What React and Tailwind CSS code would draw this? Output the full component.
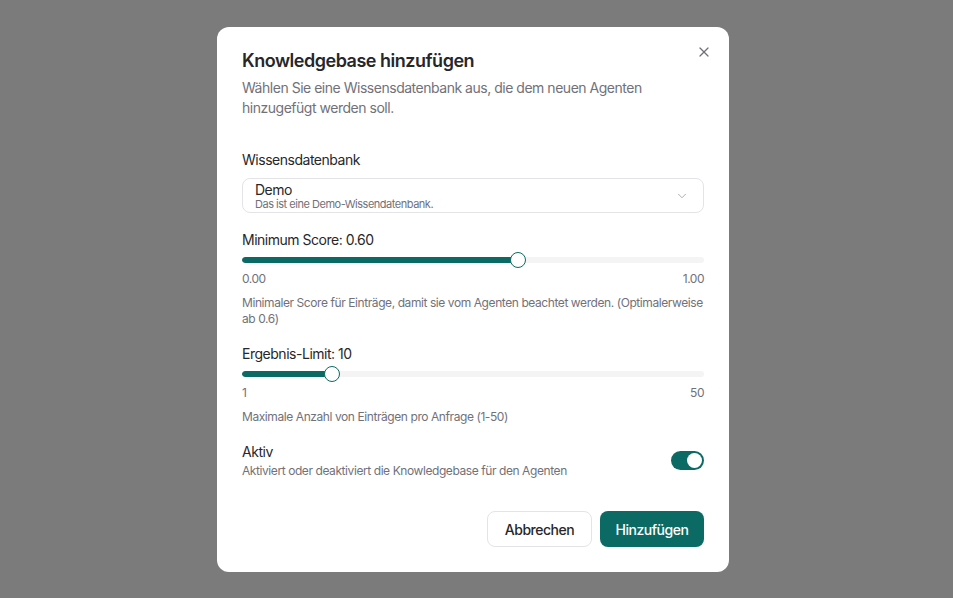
import { useState } from "react";
import * as Slider from "@radix-ui/react-slider";
import { X, ChevronDown } from "lucide-react";

function RangeField({ label, value, min, max, step, onChange, minLabel, maxLabel, hint }) {
    return (
        <div className="flex flex-col">
            <p className="text-[14px] text-[#27272a] leading-5">{label}</p>
            <Slider.Root
                className="relative flex items-center w-full h-4 mt-[2px] select-none touch-none"
                value={[value]}
                min={min}
                max={max}
                step={step}
                onValueChange={(v) => onChange(v[0])}
            >
                <Slider.Track className="relative h-[6px] grow rounded-full bg-[#f4f4f5] overflow-hidden">
                    <Slider.Range className="absolute h-full bg-[#0b6a64] rounded-full" />
                </Slider.Track>
                <Slider.Thumb className="block w-4 h-4 rounded-full bg-white border-[1.5px] border-[#0b6a64] outline-none" />
            </Slider.Root>
            <div className="flex justify-between mt-[3px] text-[12px] text-[#71717a] leading-4">
                <span>{minLabel}</span>
                <span>{maxLabel}</span>
            </div>
            <p className="mt-[8px] text-[12px] text-[#71717a] leading-4 tracking-[-0.035em]">{hint}</p>
        </div>
    );
}

export default function App() {
    const [score, setScore] = useState(0.6);
    const [limit, setLimit] = useState(10);
    const [aktiv, setAktiv] = useState(true);

    return (
        <div
            className="w-[953px] h-[598px] bg-[#7b7b7b] flex justify-start pl-[217px] pt-[27px]"
            style={{ fontFamily: "Inter, 'Noto Sans', sans-serif" }}
        >
            <div className="relative w-[512px] h-[545px] bg-white rounded-[12px] px-[25px] pt-[22px] pb-[25px] flex flex-col tracking-[-0.03em]">
                <button className="absolute right-[17px] top-[17px] text-[#71717a]">
                    <X size={16} strokeWidth={1.8} />
                </button>
                <h2 className="text-[18px] font-semibold text-[#27272a] leading-6">Knowledgebase hinzufügen</h2>
                <p className="mt-[5px] text-[14px] text-[#71717a] leading-5 pr-8">
                    Wählen Sie eine Wissensdatenbank aus, die dem neuen Agenten hinzugefügt werden soll.
                </p>

                <div className="mt-[32px] flex flex-col">
                    <p className="text-[14px] text-[#27272a] leading-5">Wissensdatenbank</p>
                    <button className="mt-2 h-[35px] w-full border border-[#e4e4e7] rounded-lg pl-[12px] pr-[14px] flex items-center justify-between text-left">
                        <div className="flex flex-col">
                            <span className="text-[14px] text-[#27272a] leading-[17px]">Demo</span>
                            <span className="text-[11px] text-[#71717a] leading-[13px]">Das ist eine Demo-Wissendatenbank.</span>
                        </div>
                        <ChevronDown size={14} className="text-[#a1a1aa]" strokeWidth={1.5} />
                    </button>
                </div>

                <div className="mt-[17px]">
                    <RangeField
                        label={`Minimum Score: ${score.toFixed(2)}`}
                        value={score}
                        min={0}
                        max={1}
                        step={0.01}
                        onChange={setScore}
                        minLabel="0.00"
                        maxLabel="1.00"
                        hint="Minimaler Score für Einträge, damit sie vom Agenten beachtet werden. (Optimalerweise ab 0.6)"
                    />
                </div>

                <div className="mt-[17px]">
                    <RangeField
                        label={`Ergebnis-Limit: ${limit}`}
                        value={limit}
                        min={1}
                        max={50}
                        step={1}
                        onChange={setLimit}
                        minLabel="1"
                        maxLabel="50"
                        hint="Maximale Anzahl von Einträgen pro Anfrage (1-50)"
                    />
                </div>

                <div className="mt-[17px] flex items-center justify-between">
                    <div className="flex flex-col">
                        <p className="text-[14px] text-[#27272a] leading-5">Aktiv</p>
                        <p className="mt-[1px] text-[12px] text-[#71717a] leading-4 tracking-[-0.035em]">Aktiviert oder deaktiviert die Knowledgebase für den Agenten</p>
                    </div>
                    <button
                        onClick={() => setAktiv(!aktiv)}
                        className={`w-[33px] h-[19px] rounded-full flex items-center px-[2px] ${aktiv ? "bg-[#0b6a64] justify-end" : "bg-[#e4e4e7] justify-start"}`}
                    >
                        <span className="block w-[15px] h-[15px] rounded-full bg-white" />
                    </button>
                </div>

                <div className="mt-auto flex justify-end gap-2">
                    <button className="h-[36px] w-[105px] rounded-lg border border-[#e4e4e7] bg-white text-[14px] font-medium text-[#27272a]">
                        Abbrechen
                    </button>
                    <button className="h-[36px] w-[104px] rounded-lg bg-[#0b6a64] text-[14px] font-medium text-white">
                        Hinzufügen
                    </button>
                </div>
            </div>
        </div>
    );
}
